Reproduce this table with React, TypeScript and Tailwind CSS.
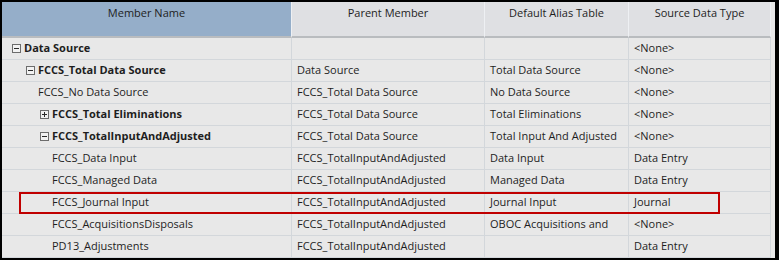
import type React from "react"

type Row = {
  name: string
  level: number
  toggle?: "open" | "closed"
  parent: string
  alias: string
  source: string
}

const rows: Row[] = [
  { name: "Data Source", level: 0, toggle: "open", parent: "", alias: "", source: "<None>" },
  { name: "FCCS_Total Data Source", level: 1, toggle: "open", parent: "Data Source", alias: "Total Data Source", source: "<None>" },
  { name: "FCCS_No Data Source", level: 1, parent: "FCCS_Total Data Source", alias: "No Data Source", source: "<None>" },
  { name: "FCCS_Total Eliminations", level: 2, toggle: "closed", parent: "FCCS_Total Data Source", alias: "Total Eliminations", source: "<None>" },
  { name: "FCCS_TotalInputAndAdjusted", level: 2, toggle: "open", parent: "FCCS_Total Data Source", alias: "Total Input And Adjusted", source: "<None>" },
  { name: "FCCS_Data Input", level: 2, parent: "FCCS_TotalInputAndAdjusted", alias: "Data Input", source: "Data Entry" },
  { name: "FCCS_Managed Data", level: 2, parent: "FCCS_TotalInputAndAdjusted", alias: "Managed Data", source: "Data Entry" },
  { name: "FCCS_Journal Input", level: 2, parent: "FCCS_TotalInputAndAdjusted", alias: "Journal Input", source: "Journal" },
  { name: "FCCS_AcquisitionsDisposals", level: 2, parent: "FCCS_TotalInputAndAdjusted", alias: "OBOC Acquisitions and", source: "<None>" },
  { name: "PD13_Adjustments", level: 2, parent: "FCCS_TotalInputAndAdjusted", alias: "", source: "Data Entry" },
]

const indent = ["pl-[10px]", "pl-[24px]", "pl-[38px]"]

function Toggle({ state }: { state: "open" | "closed" }) {
  return (
    <svg width="9" height="9" viewBox="0 0 9 9" className="mr-[3px] shrink-0">
      <rect x="0.5" y="0.5" width="8" height="8" fill="#f2f2f2" stroke="#6c6c6c" />
      <path d="M2 4.5h5" stroke="#2a2a2a" strokeWidth="1" />
      {state === "closed" && <path d="M4.5 2v5" stroke="#2a2a2a" strokeWidth="1" />}
    </svg>
  )
}

function Cell({ children, className = "" }: { children?: React.ReactNode; className?: string }) {
  return (
    <div className={`flex h-[22px] items-center border-r border-b border-[#d3d7db] bg-[#e8e8e8] whitespace-nowrap overflow-hidden ${className}`}>
      {children}
    </div>
  )
}

const head = "h-[36px] border-r border-[#eef0f3] border-b-2 border-b-[#b9bcbf] pt-[3px] text-center"

export default function App() {
  return (
    <div className="relative h-[260px] w-[779px] border-t-2 border-r-4 border-b-2 border-l-2 border-black bg-[#e8e8e8] text-[11px] text-[#1e1e1e] font-['Open_Sans',sans-serif]">
      <div className="grid grid-cols-[290px_193px_144px_142px]">
        <div className={`${head} bg-[#95aec9]`}>Member Name</div>
        <div className={`${head} bg-[#dfe0e3]`}>Parent Member</div>
        <div className={`${head} bg-[#dfe0e3]`}>Default Alias Table</div>
        <div className={`${head} bg-[#dfe0e3]`}>Source Data Type</div>

        {rows.map((r) => (
          <Row key={r.name} row={r} />
        ))}
      </div>

      {/* highlight around the journal row */}
      <div className="absolute left-[17px] top-[190px] h-[22px] w-[701px] border-2 border-[#c00000]" />
    </div>
  )
}

function Row({ row }: { row: Row }) {
  return (
    <>
      <Cell className={`${indent[row.level]} ${row.toggle ? "font-bold" : ""}`}>
        {row.toggle ? <Toggle state={row.toggle} /> : <span className="w-[12px] shrink-0" />}
        {row.name}
      </Cell>
      <Cell className="pl-[5px]">{row.parent}</Cell>
      <Cell className="pl-[5px]">{row.alias}</Cell>
      <Cell className="pl-[5px]">{row.source}</Cell>
    </>
  )
}
